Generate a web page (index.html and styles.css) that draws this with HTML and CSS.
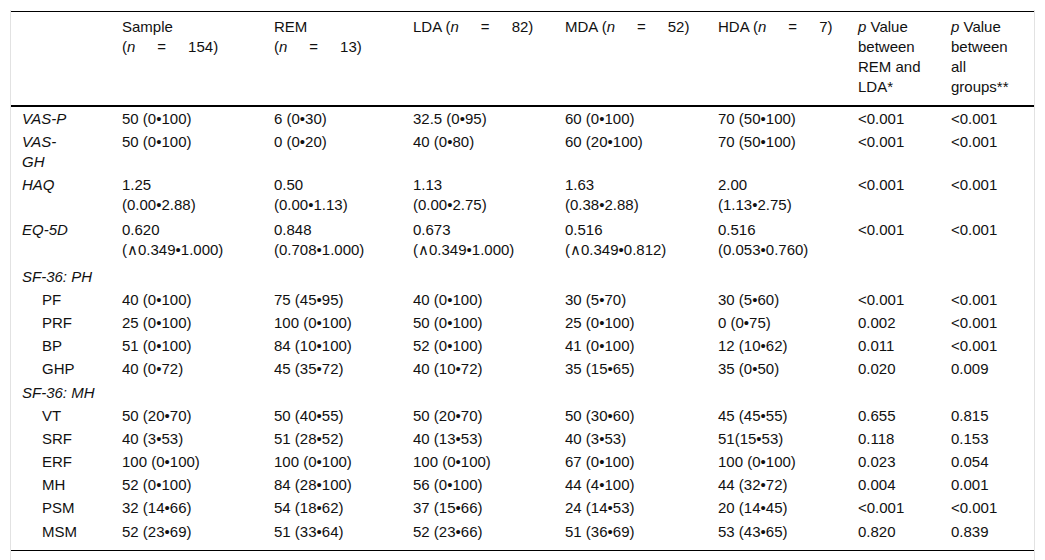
FILE: index.html
```html
<!DOCTYPE html>
<html>
<head>
<meta charset="utf-8">
<link rel="stylesheet" href="styles.css">
</head>
<body>
<div class="wrap">
<table class="tbl">
<colgroup>
<col class="c1"><col class="c2"><col class="c3"><col class="c4"><col class="c5"><col class="c6"><col class="c7"><col class="c8">
</colgroup>
<thead>
<tr>
<th></th>
<th>Sample<br>(<i>n</i><span class="eq">=</span>154)</th>
<th>REM<br>(<i>n</i><span class="eq">=</span>13)</th>
<th>LDA (<i>n</i><span class="eq">=</span>82)</th>
<th>MDA (<i>n</i><span class="eq">=</span>52)</th>
<th>HDA (<i>n</i><span class="eq">=</span>7)</th>
<th><i>p</i> Value<br>between<br>REM and<br>LDA*</th>
<th><i>p</i> Value<br>between<br>all<br>groups**</th>
</tr>
</thead>
<tbody>
<tr><td class="lbl">VAS-P</td><td>50 (0•100)</td><td>6 (0•30)</td><td>32.5 (0•95)</td><td>60 (0•100)</td><td>70 (50•100)</td><td>&lt;0.001</td><td>&lt;0.001</td></tr>
<tr><td class="lbl">VAS-<br>GH</td><td>50 (0•100)</td><td>0 (0•20)</td><td>40 (0•80)</td><td>60 (20•100)</td><td>70 (50•100)</td><td>&lt;0.001</td><td>&lt;0.001</td></tr>
<tr><td class="lbl">HAQ</td><td>1.25<br>(0.00•2.88)</td><td>0.50<br>(0.00•1.13)</td><td>1.13<br>(0.00•2.75)</td><td>1.63<br>(0.38•2.88)</td><td>2.00<br>(1.13•2.75)</td><td>&lt;0.001</td><td>&lt;0.001</td></tr>
<tr class="tall"><td class="lbl">EQ-5D</td><td>0.620<br>(∧0.349•1.000)</td><td>0.848<br>(0.708•1.000)</td><td>0.673<br>(∧0.349•1.000)</td><td>0.516<br>(∧0.349•0.812)</td><td>0.516<br>(0.053•0.760)</td><td>&lt;0.001</td><td>&lt;0.001</td></tr>
<tr><td class="lbl">SF-36: PH</td><td></td><td></td><td></td><td></td><td></td><td></td><td></td></tr>
<tr><td class="sub">PF</td><td>40 (0•100)</td><td>75 (45•95)</td><td>40 (0•100)</td><td>30 (5•70)</td><td>30 (5•60)</td><td>&lt;0.001</td><td>&lt;0.001</td></tr>
<tr><td class="sub">PRF</td><td>25 (0•100)</td><td>100 (0•100)</td><td>50 (0•100)</td><td>25 (0•100)</td><td>0 (0•75)</td><td>0.002</td><td>&lt;0.001</td></tr>
<tr><td class="sub">BP</td><td>51 (0•100)</td><td>84 (10•100)</td><td>52 (0•100)</td><td>41 (0•100)</td><td>12 (10•62)</td><td>0.011</td><td>&lt;0.001</td></tr>
<tr><td class="sub">GHP</td><td>40 (0•72)</td><td>45 (35•72)</td><td>40 (10•72)</td><td>35 (15•65)</td><td>35 (0•50)</td><td>0.020</td><td>0.009</td></tr>
<tr><td class="lbl">SF-36: MH</td><td></td><td></td><td></td><td></td><td></td><td></td><td></td></tr>
<tr><td class="sub">VT</td><td>50 (20•70)</td><td>50 (40•55)</td><td>50 (20•70)</td><td>50 (30•60)</td><td>45 (45•55)</td><td>0.655</td><td>0.815</td></tr>
<tr><td class="sub">SRF</td><td>40 (3•53)</td><td>51 (28•52)</td><td>40 (13•53)</td><td>40 (3•53)</td><td>51(15•53)</td><td>0.118</td><td>0.153</td></tr>
<tr><td class="sub">ERF</td><td>100 (0•100)</td><td>100 (0•100)</td><td>100 (0•100)</td><td>67 (0•100)</td><td>100 (0•100)</td><td>0.023</td><td>0.054</td></tr>
<tr><td class="sub">MH</td><td>52 (0•100)</td><td>84 (28•100)</td><td>56 (0•100)</td><td>44 (4•100)</td><td>44 (32•72)</td><td>0.004</td><td>0.001</td></tr>
<tr><td class="sub">PSM</td><td>32 (14•66)</td><td>54 (18•62)</td><td>37 (15•66)</td><td>24 (14•53)</td><td>20 (14•45)</td><td>&lt;0.001</td><td>&lt;0.001</td></tr>
<tr class="last"><td class="sub">MSM</td><td>52 (23•69)</td><td>51 (33•64)</td><td>52 (23•66)</td><td>51 (36•69)</td><td>53 (43•65)</td><td>0.820</td><td>0.839</td></tr>
</tbody>
</table>
</div>
</body>
</html>
```

FILE: styles.css
```css
html, body {
  margin: 0;
  padding: 0;
  background: #fff;
}
body {
  font-family: "Liberation Sans", Arial, sans-serif;
  font-size: 15px;
  color: #111;
}
.wrap {
  margin: 10px 0 0 10px;
  width: 1023px;
  height: 550px;
  border-left: 1px solid #e2e2e2;
  border-right: 1px solid #e2e2e2;
  padding-top: 1px;
  box-sizing: content-box;
}
.tbl {
  width: 1023px;
  table-layout: fixed;
  border-collapse: collapse;
  border-top: 1px solid #000;
  border-bottom: 1px solid #000;
}
.c1 { width: 100px; }
.c2 { width: 152px; }
.c3 { width: 139px; }
.c4 { width: 152px; }
.c5 { width: 153px; }
.c6 { width: 140px; }
.c7 { width: 93px; }
.c8 { width: 94px; }
.tbl th {
  font-weight: normal;
  text-align: left;
  vertical-align: top;
  line-height: 20px;
  padding: 5px 4px 8px 11px;
  border-bottom: 2px solid #000;
}
.tbl td {
  text-align: left;
  vertical-align: top;
  line-height: 20px;
  padding: 2px 4px 1.2px 11px;
}
.tbl tr.tall td {
  padding-top: 3px;
  padding-bottom: 5px;
}
.tbl tr.last td {
  padding-bottom: 8px;
}
.eq {
  padding: 0 22px;
}
.tbl td.lbl {
  font-style: italic;
}
.tbl td.sub {
  padding-left: 31px;
}
```
